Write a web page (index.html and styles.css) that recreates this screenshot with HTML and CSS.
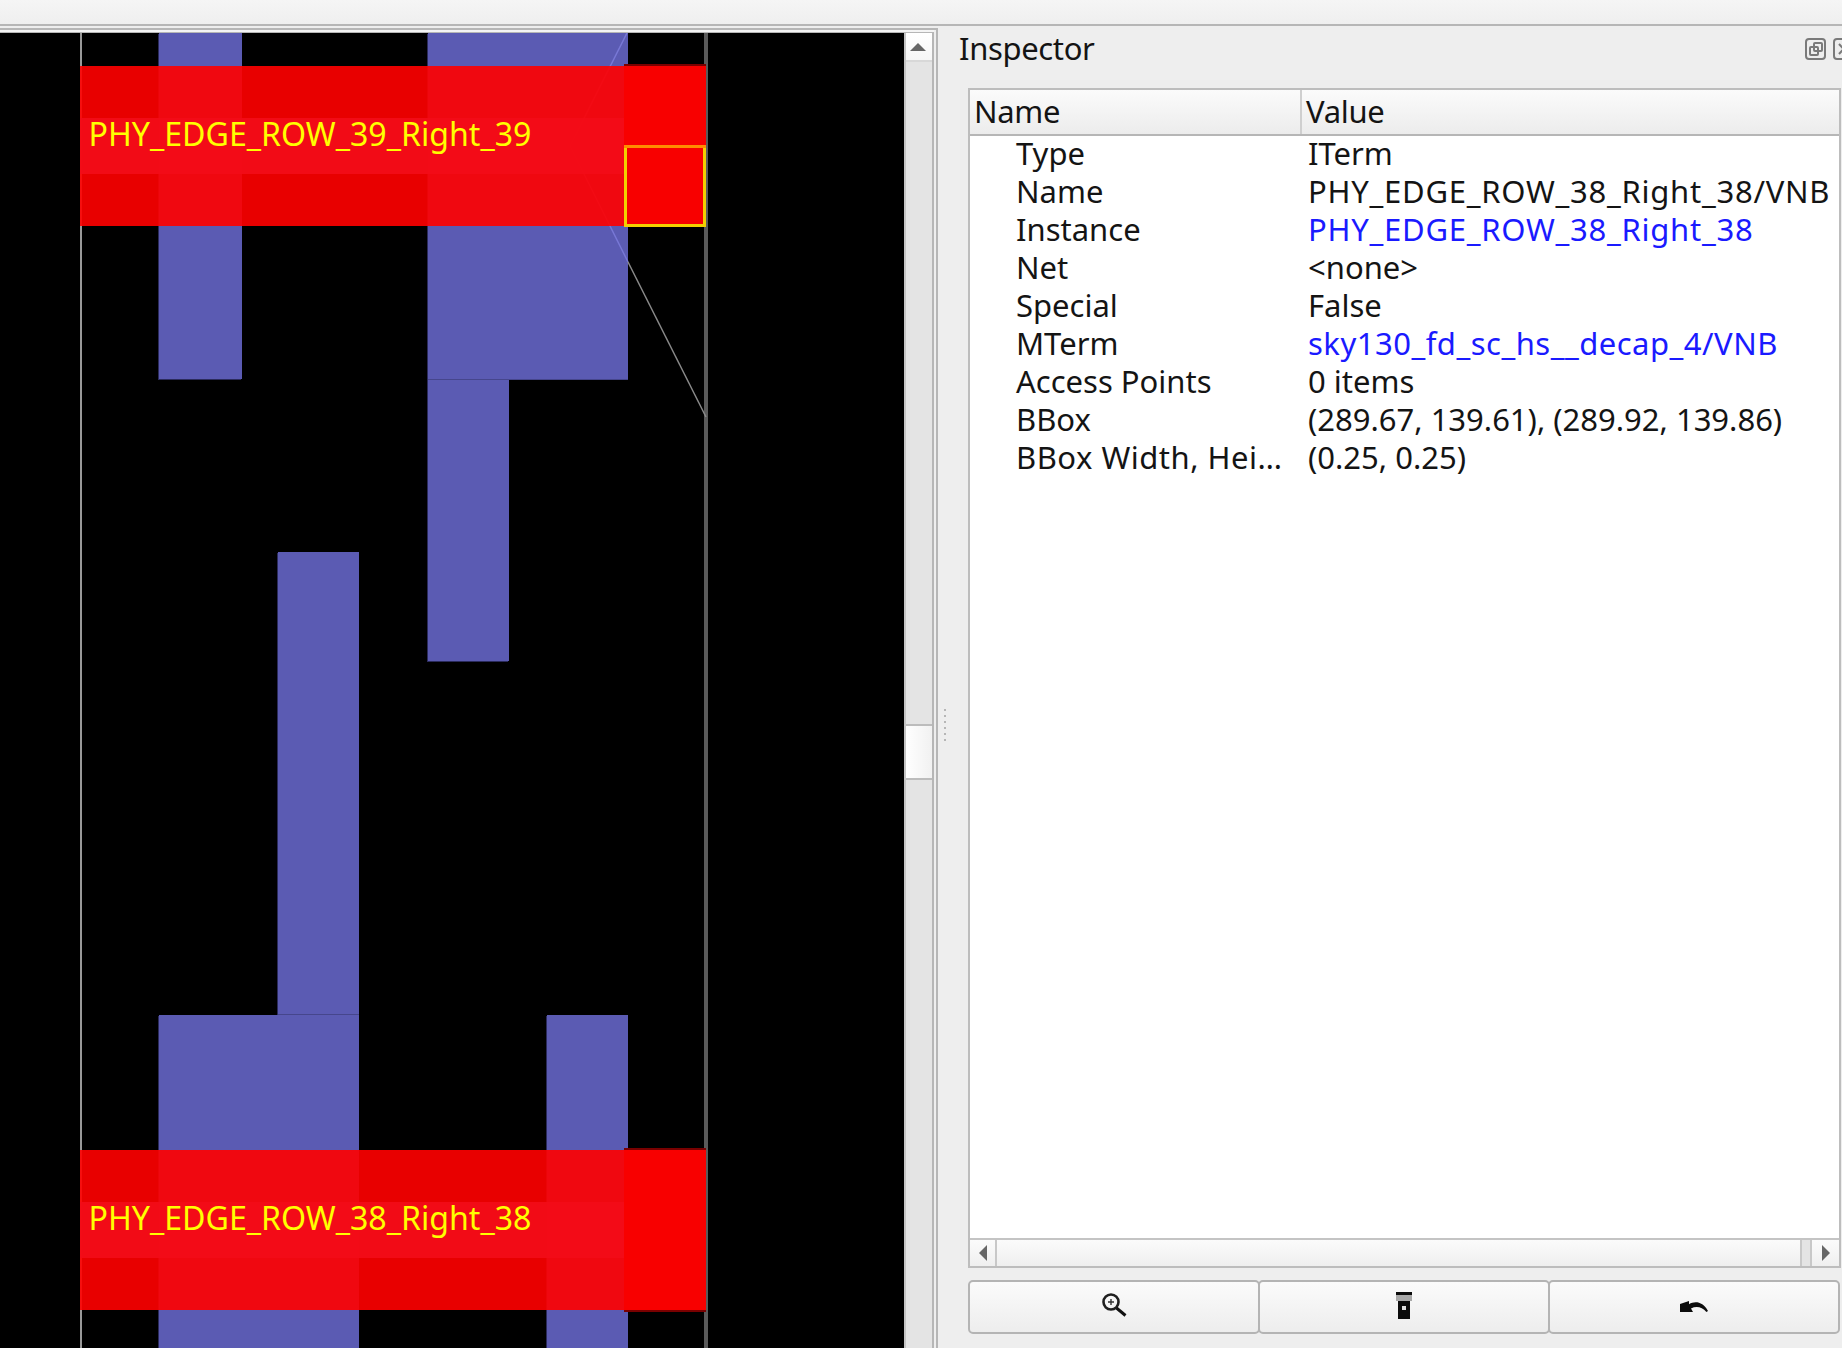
FILE: index.html
```html
<!DOCTYPE html>
<html lang="en">
<head>
<meta charset="utf-8">
<title>Inspector</title>
<link rel="stylesheet" href="styles.css">
</head>
<body>
<div class="app">
  <div class="menubar"></div>
  <div class="workspace">
    <section class="dock">
      <div class="dock-rule"></div>
      <div class="view">
        <svg class="layout" viewBox="0 33 904 1315" width="904" height="1315" xmlns="http://www.w3.org/2000/svg">
          <g class="blues">
            <rect x="159" y="33" width="83" height="346"/>
            <rect x="428" y="33" width="200" height="346"/>
            <rect x="428" y="379" width="81" height="282"/>
            <rect x="278" y="552" width="81" height="463"/>
            <rect x="159" y="1015" width="200" height="333"/>
            <rect x="547" y="1015" width="81" height="333"/>
          </g>
          <rect class="seam" x="428" y="379" width="200" height="1"/>
          <rect class="seam" x="278" y="1014" width="81" height="1"/>
          <rect class="bound-l" x="80" y="33" width="2" height="1315"/>
          <rect class="bound-r" x="704" y="33" width="4" height="1315"/>
          <line class="ruler-blue" x1="627" y1="33" x2="570" y2="146"/>
          <line class="ruler-blue" x1="570" y1="146" x2="628" y2="262"/>
          <line class="ruler-gray" x1="628" y1="262" x2="706" y2="417"/>
          <rect class="cell" x="80" y="66" width="626" height="160"/>
          <rect class="cell-mid" x="80" y="118" width="544" height="56"/>
          <rect class="cell-edge" x="624" y="64" width="82" height="2"/>
          <rect class="cell-end" x="624" y="66" width="82" height="160"/>
          <rect class="cell" x="80" y="1150" width="626" height="160"/>
          <rect class="cell-mid" x="80" y="1202" width="544" height="56"/>
          <rect class="cell-edge" x="624" y="1148" width="82" height="2"/>
          <rect class="cell-edge" x="624" y="1310" width="82" height="2"/>
          <rect class="cell-end" x="624" y="1150" width="82" height="160"/>
          <rect class="pick" x="625.5" y="146.5" width="79" height="79"/>
          <rect class="pick-top" x="624" y="145" width="82" height="3"/>
          <text class="label" x="88.5" y="146" textLength="443" lengthAdjust="spacingAndGlyphs">PHY_EDGE_ROW_39_Right_39</text>
          <text class="label" x="88.5" y="1230" textLength="443" lengthAdjust="spacingAndGlyphs">PHY_EDGE_ROW_38_Right_38</text>
        </svg>
        <div class="vscroll">
          <div class="vscroll-up"><span class="arrow-up"></span></div>
          <div class="vscroll-before"></div>
          <div class="vscroll-handle"></div>
          <div class="vscroll-after"></div>
        </div>
      </div>
    </section>
    <div class="splitter">
      <i></i><i></i><i></i><i></i><i></i><i></i>
    </div>
    <section class="panel">
      <header class="panel-title">
        <h1>Inspector</h1>
        <div class="float-icons">
          <svg class="float-icon" viewBox="0 0 22 22" width="22" height="22" xmlns="http://www.w3.org/2000/svg">
            <rect x="1" y="1" width="19" height="20" rx="3"/>
            <rect x="9" y="5" width="8" height="8" rx="1"/>
            <rect x="5" y="9" width="8" height="8" rx="1"/>
          </svg>
          <svg class="float-icon" viewBox="0 0 22 22" width="22" height="22" xmlns="http://www.w3.org/2000/svg">
            <rect x="1" y="1" width="19" height="20" rx="3"/>
            <path d="M6 6l9 10M15 6l-9 10"/>
          </svg>
        </div>
      </header>
      <div class="tree">
        <div class="tree-head">
          <div class="head-name">Name</div>
          <div class="head-value">Value</div>
        </div>
        <div class="tree-body">
          <div class="row"><span class="key">Type</span><span class="val">ITerm</span></div>
          <div class="row"><span class="key">Name</span><span class="val wide">PHY_EDGE_ROW_38_Right_38/VNB</span></div>
          <div class="row"><span class="key">Instance</span><span class="val link wide">PHY_EDGE_ROW_38_Right_38</span></div>
          <div class="row"><span class="key">Net</span><span class="val">&lt;none&gt;</span></div>
          <div class="row"><span class="key">Special</span><span class="val">False</span></div>
          <div class="row"><span class="key">MTerm</span><span class="val link loose">sky130_fd_sc_hs__decap_4/VNB</span></div>
          <div class="row"><span class="key">Access Points</span><span class="val">0 items</span></div>
          <div class="row"><span class="key">BBox</span><span class="val">(289.67, 139.61), (289.92, 139.86)</span></div>
          <div class="row"><span class="key"><span class="loose">BBox Width, Hei…</span></span><span class="val">(0.25, 0.25)</span></div>
        </div>
        <div class="hscroll">
          <div class="hscroll-btn hscroll-left"><span class="arrow-left"></span></div>
          <div class="hscroll-track"></div>
          <div class="hscroll-end"></div>
          <div class="hscroll-btn hscroll-right"><span class="arrow-right"></span></div>
        </div>
      </div>
      <div class="actions">
        <button class="action" type="button" aria-label="Zoom to">
          <svg viewBox="0 0 30 30" width="30" height="30" xmlns="http://www.w3.org/2000/svg">
            <circle class="ic-stroke" cx="12" cy="10" r="7.500"/>
            <path class="ic-thin" d="M12 7v6M9 10h6"/>
            <path class="ic-handle" d="M17.500 16l9 7.500"/>
          </svg>
        </button>
        <button class="action" type="button" aria-label="Highlight">
          <svg viewBox="0 0 30 30" width="30" height="30" xmlns="http://www.w3.org/2000/svg">
            <rect class="ic-black" x="7" y="0" width="16" height="3"/>
            <rect class="ic-gray" x="7" y="3" width="16" height="6"/>
            <rect class="ic-black" x="9" y="9" width="12" height="18"/>
            <rect class="ic-slot" x="13" y="14" width="4" height="4"/>
          </svg>
        </button>
        <button class="action" type="button" aria-label="Back">
          <svg viewBox="0 0 30 16" width="30" height="16" xmlns="http://www.w3.org/2000/svg">
            <path class="ic-black" d="M1 5l9-3v3.200C16 1.600 24 2.600 29 12l-1.600 1C23 7.600 17 7 12 9.500l2 3.500H1z"/>
          </svg>
        </button>
      </div>
    </section>
  </div>
</div>
</body>
</html>
```

FILE: styles.css
```css
* { box-sizing: border-box; }

html, body {
  margin: 0;
  height: 100%;
}

body {
  font-family: "Noto Sans", "Open Sans", sans-serif;
  font-size: 31px;
  color: #141414;
  background: #eeeeee;
  overflow: hidden;
}

.app {
  width: 1842px;
  height: 1348px;
  display: flex;
  flex-direction: column;
}

.menubar {
  flex: 0 0 26px;
  background: linear-gradient(#f5f5f5, #efefef);
  border-bottom: 2px solid #b6b6b6;
}

.workspace {
  flex: 1;
  min-height: 0;
  display: flex;
}

/* left dock */
.dock {
  flex: 0 0 938px;
  margin-top: 2px;
  padding-right: 2px;
  border-top: 2px solid #b6b6b6;
  border-right: 2px solid #b6b6b6;
  display: flex;
  flex-direction: column;
  min-height: 0;
}

.dock-rule {
  flex: 0 0 3px;
  background: #f4f4f4;
  border-bottom: 1px solid #b6b6b6;
}

.view {
  flex: 1;
  min-height: 0;
  display: flex;
  border-right: 2px solid #b6b6b6;
}

.layout {
  flex: 0 0 904px;
  display: block;
  background: #000;
}

.layout rect { shape-rendering: crispEdges; }

.blues {
  fill: #5b5bb3;
  filter: drop-shadow(-1px 1px 0 #2b2b5c);
}

.seam { fill: #46468c; }
.bound-l { fill: #999999; }
.bound-r { fill: #5a5a5a; }

.ruler-blue { stroke: #7878d6; stroke-width: 1.5; }
.ruler-gray { stroke: #8a8a8a; stroke-width: 1.5; }

.cell { fill: #ff0000; opacity: 0.91; }
.cell-mid { fill: #f30c18; opacity: 0.9; }
.cell-end { fill: #f80000; }
.cell-edge { fill: #7a0000; }

.pick {
  fill: #f80000;
  stroke: #f2d000;
  stroke-width: 3;
}

.pick-top { fill: #ff8c00; }

.label {
  font-family: "Noto Sans", sans-serif;
  font-size: 32px;
  fill: #ffff00;
}

/* vertical scrollbar */
.vscroll {
  flex: 0 0 28px;
  display: flex;
  flex-direction: column;
  background: #e4e4e4;
  border-left: 2px solid #c4c4c4;
}

.vscroll-up {
  flex: 0 0 29px;
  display: flex;
  align-items: center;
  justify-content: center;
  padding-right: 2px;
  background: linear-gradient(#ffffff, #f6f6f6);
  border-bottom: 2px solid #d8d8d8;
}

.arrow-up {
  width: 0;
  height: 0;
  border-left: 8px solid transparent;
  border-right: 8px solid transparent;
  border-bottom: 8px solid #666666;
}

.vscroll-before { flex: 0 0 662px; }

.vscroll-handle {
  flex: 0 0 56px;
  background: linear-gradient(90deg, #ffffff, #f1f1f1);
  border-top: 2px solid #bcbcbc;
  border-bottom: 2px solid #bcbcbc;
}

.vscroll-after { flex: 1; }

/* splitter */
.splitter {
  flex: 0 0 14px;
  display: flex;
  flex-direction: column;
  gap: 4px;
  padding: 683px 0 0 6px;
}

.splitter i {
  display: block;
  width: 2px;
  height: 2px;
  background: #b6b6b6;
}

/* inspector */
.panel {
  flex: 1;
  min-width: 0;
  display: flex;
  flex-direction: column;
  padding: 0 0 14px 7px;
}

.panel-title {
  flex: 0 0 62px;
  display: flex;
  justify-content: space-between;
  overflow: hidden;
}

.panel-title h1 {
  margin: 0;
  padding-top: 3px;
  font-size: inherit;
  font-weight: 400;
  line-height: 38px;
  letter-spacing: -0.35px;
}

.float-icons {
  display: flex;
  gap: 6px;
  padding-top: 12px;
  margin-right: -13px;
}

.float-icon {
  fill: none;
  stroke: #7a7a7a;
  stroke-width: 2;
}

.tree {
  flex: 1;
  min-height: 0;
  margin-left: 9px;
  margin-right: 1px;
  display: flex;
  flex-direction: column;
  background: #ffffff;
  border: 2px solid #bdbdbd;
}

.tree-head {
  flex: 0 0 46px;
  display: flex;
  background: linear-gradient(#fbfbfb, #ececec);
  border-bottom: 2px solid #b6b6b6;
  line-height: 42px;
  letter-spacing: -0.3px;
}

.head-name {
  flex: 0 0 332px;
  padding-left: 4px;
  border-right: 2px solid #cfcfcf;
}

.head-value { padding-left: 4px; }

.tree-body {
  flex: 1;
  min-height: 0;
}

.row {
  display: flex;
  height: 38px;
  line-height: 34px;
  white-space: nowrap;
}

.key {
  flex: 0 0 338px;
  padding-left: 46px;
}

.wide { letter-spacing: 0.75px; }
.loose { letter-spacing: 0.5px; }
.link { color: #1a1aff; }

.hscroll {
  flex: 0 0 28px;
  display: flex;
  background: linear-gradient(#fbfbfb, #efefef);
  border-top: 2px solid #c4c4c4;
}

.hscroll-btn {
  flex: 0 0 27px;
  display: flex;
  align-items: center;
  justify-content: center;
}

.hscroll-left { border-right: 2px solid #c8c8c8; }
.hscroll-track { flex: 1; }

.hscroll-end {
  flex: 0 0 12px;
  background: #e4e4e4;
  border-left: 2px solid #c8c8c8;
  border-right: 2px solid #c8c8c8;
}

.arrow-left,
.arrow-right {
  width: 0;
  height: 0;
  border-top: 8px solid transparent;
  border-bottom: 8px solid transparent;
}

.arrow-left { border-right: 8px solid #666666; }
.arrow-right { border-left: 8px solid #666666; }

/* buttons */
.actions {
  flex: 0 0 54px;
  margin-top: 12px;
  margin-left: 9px;
  margin-right: 2px;
  display: flex;
}

.action {
  flex: 1;
  margin: 0 -2px 0 0;
  padding: 0;
  display: flex;
  align-items: center;
  justify-content: center;
  background: linear-gradient(#fbfbfb, #ededed);
  border: 2px solid #b4b4b4;
  border-radius: 5px;
}

.action:last-child { margin-right: 0; }

.ic-stroke {
  fill: none;
  stroke: #1f1f1f;
  stroke-width: 2.6;
}

.ic-thin {
  fill: none;
  stroke: #333333;
  stroke-width: 1.4;
}

.ic-handle {
  fill: none;
  stroke: #111111;
  stroke-width: 3;
}

.ic-black { fill: #0c0c0c; }
.ic-gray { fill: #a8a8a8; }
.ic-slot { fill: #e0e0e0; }
```
